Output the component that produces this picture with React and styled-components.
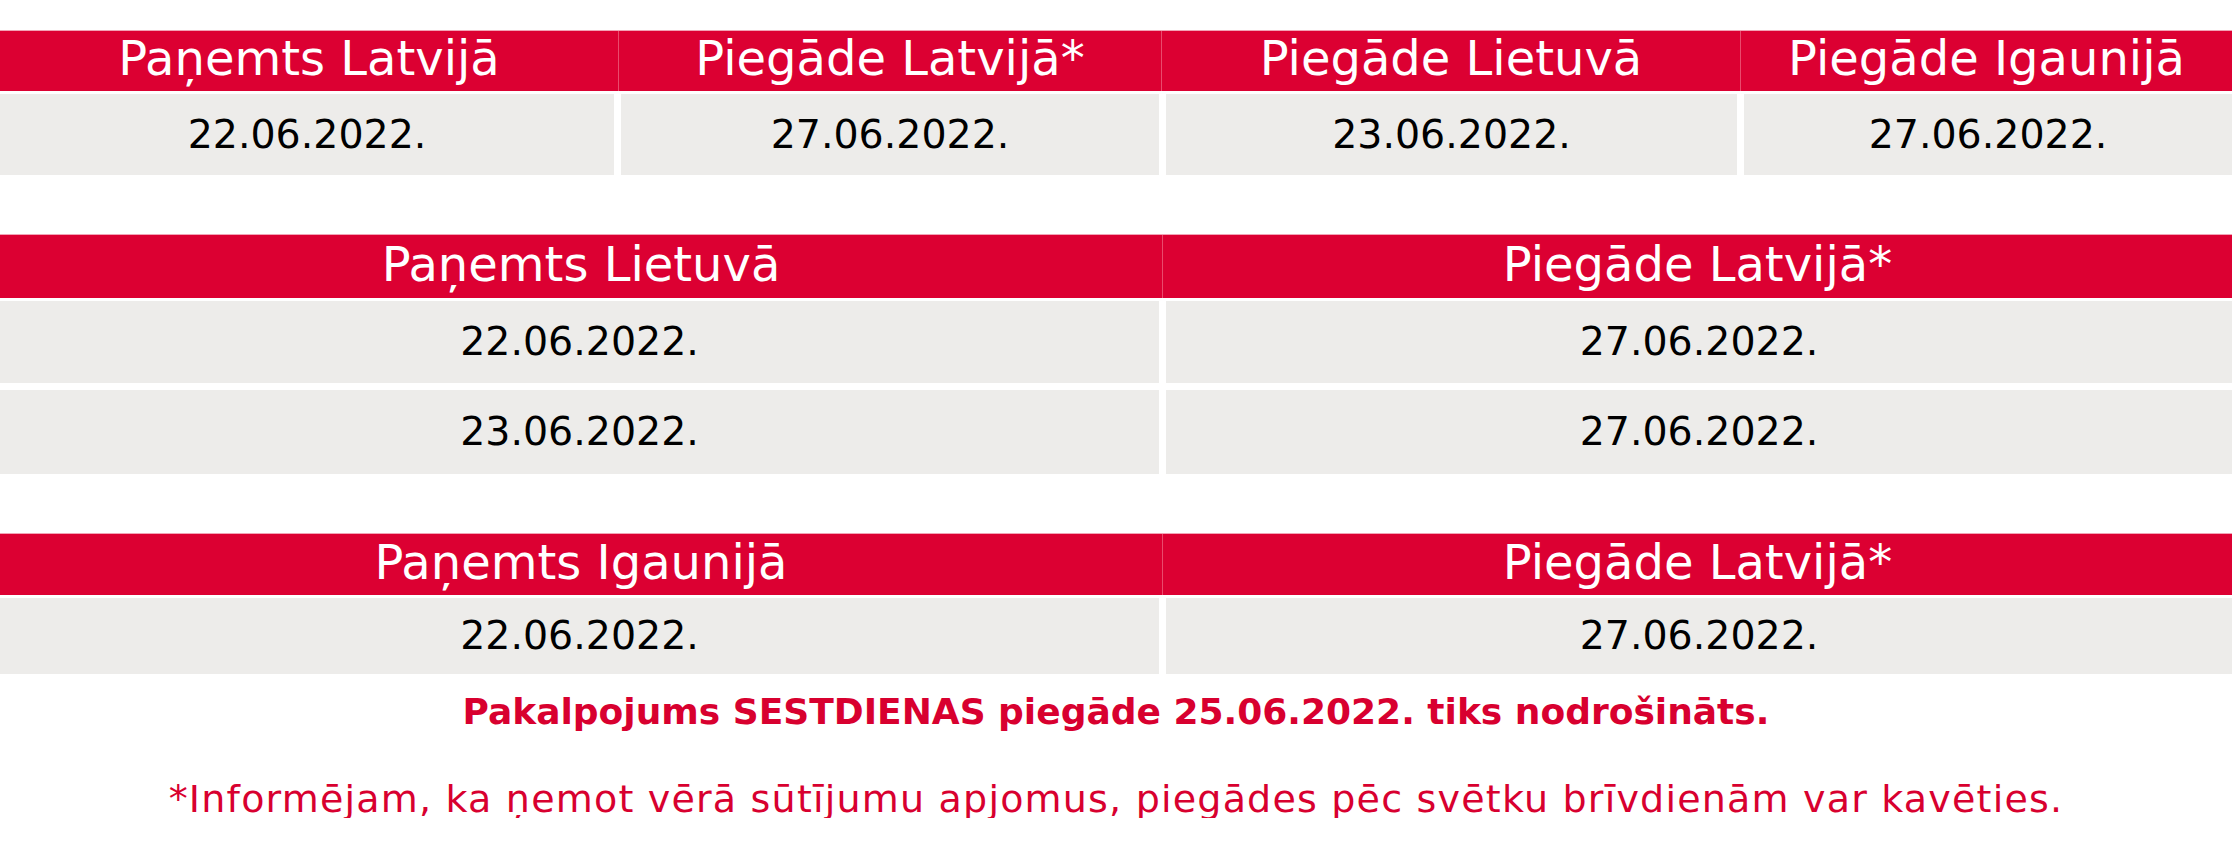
import React from 'react';
import styled, { createGlobalStyle } from 'styled-components';

const GlobalStyle = createGlobalStyle`
  html, body {
    margin: 0;
    padding: 0;
    background: #ffffff;
  }
  body {
    font-family: "DejaVu Sans", "Open Sans", sans-serif;
  }
`;

const Page = styled.div`
  width: 2232px;
  padding-top: 30px;
  display: flex;
  flex-direction: column;
`;

const Table = styled.section`
  display: flex;
  flex-direction: column;
  margin-bottom: ${({ $after }) => $after}px;
`;

const HeadRow = styled.div`
  display: grid;
  grid-template-columns: ${({ $cols }) => $cols};
  height: ${({ $h }) => $h}px;
  background: #dc0032;
  border-top: 1px solid #f2a3b5;
  box-sizing: border-box;
  margin-bottom: ${({ $gap }) => $gap}px;
`;

const HeadCell = styled.div`
  display: flex;
  align-items: center;
  justify-content: center;
  color: #ffffff;
  font-family: "DejaVu Sans", "Open Sans", sans-serif;
  font-size: 48px;
  line-height: 1;
  padding-bottom: 6px;
  & + & {
    border-left: 1px solid #ea4a6c;
  }
`;

const BodyRow = styled.div`
  display: grid;
  grid-template-columns: ${({ $cols }) => $cols};
  column-gap: 7px;
  margin-top: ${({ $top }) => $top}px;
`;

const BodyCell = styled.div`
  height: ${({ $h }) => $h}px;
  background: #edecea;
  display: flex;
  align-items: center;
  justify-content: center;
  color: #000000;
  font-family: "DejaVu Sans", Inter, sans-serif;
  font-size: 39.5px;
  line-height: 1;
`;

const Notes = styled.div`
  display: flex;
  flex-direction: column;
  align-items: center;
  color: #d8002f;
  font-family: "DejaVu Sans", Inter, sans-serif;
  line-height: 1;
`;

const Note = styled.p`
  margin: 0;
  font-size: ${({ $bold }) => ($bold ? 36 : 38)}px;
  font-weight: ${({ $bold }) => ($bold ? 700 : 400)};
  letter-spacing: ${({ $bold }) => ($bold ? 0 : 1.2)}px;
  margin-top: ${({ $top }) => $top}px;
`;

const tables = [
  {
    head: ['Paņemts Latvijā', 'Piegāde Latvijā*', 'Piegāde Lietuvā', 'Piegāde Igaunijā'],
    headCols: '618px 543px 579px 1fr',
    bodyCols: '614px 538px 571px 1fr',
    headH: 61,
    rows: [{ h: 81, cells: ['22.06.2022.', '27.06.2022.', '23.06.2022.', '27.06.2022.'] }],
    after: 59,
  },
  {
    head: ['Paņemts Lietuvā', 'Piegāde Latvijā*'],
    headCols: '1162px 1fr',
    bodyCols: '1159px 1fr',
    headH: 64,
    rows: [
      { h: 82, cells: ['22.06.2022.', '27.06.2022.'] },
      { h: 84, cells: ['23.06.2022.', '27.06.2022.'] },
    ],
    after: 59,
  },
  {
    head: ['Paņemts Igaunijā', 'Piegāde Latvijā*'],
    headCols: '1162px 1fr',
    bodyCols: '1159px 1fr',
    headH: 62,
    rows: [{ h: 76, cells: ['22.06.2022.', '27.06.2022.'] }],
    after: 0,
  },
];

export default function App() {
  return (
    <>
      <GlobalStyle />
      <Page>
        {tables.map((t, ti) => (
          <Table key={ti} $after={t.after}>
            <HeadRow $cols={t.headCols} $h={t.headH} $gap={3}>
              {t.head.map((h) => (
                <HeadCell key={h}>{h}</HeadCell>
              ))}
            </HeadRow>
            {t.rows.map((r, ri) => (
              <BodyRow key={ri} $cols={t.bodyCols} $top={ri === 0 ? 0 : 7}>
                {r.cells.map((c, ci) => (
                  <BodyCell key={ci} $h={r.h}>{c}</BodyCell>
                ))}
              </BodyRow>
            ))}
          </Table>
        ))}
        <Notes>
          <Note $bold $top={20}>Pakalpojums SESTDIENAS piegāde 25.06.2022. tiks nodrošināts.</Note>
          <Note $top={50}>*Informējam, ka ņemot vērā sūtījumu apjomus, piegādes pēc svētku brīvdienām var kavēties.</Note>
        </Notes>
      </Page>
    </>
  );
}
